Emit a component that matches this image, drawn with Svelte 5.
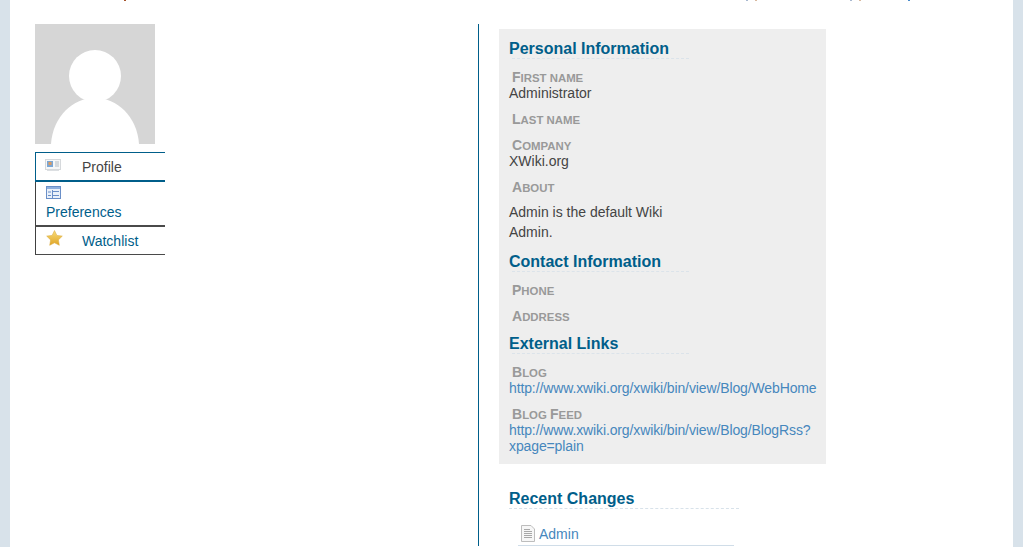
<script>
	const sections = [
		{ title: 'Personal Information', fields: [
			{ label: 'First name', value: 'Administrator' },
			{ label: 'Last name' },
			{ label: 'Company', value: 'XWiki.org' },
			{ label: 'About', about: 'Admin is the default Wiki Admin.' }
		] },
		{ title: 'Contact Information', fields: [
			{ label: 'Phone' },
			{ label: 'Address' }
		] },
		{ title: 'External Links', fields: [
			{ label: 'Blog', link: 'http://www.xwiki.org/xwiki/bin/view/Blog/WebHome' },
			{ label: 'Blog Feed', link: 'http://www.xwiki.org/xwiki/bin/view/Blog/BlogRss?xpage=plain' }
		] }
	];

	// small caps by hand: capitals stay big, the rest gets the smaller size
	const capsParts = (text) => text.match(/[A-Z]|[^A-Z]+/g);
</script>

<div class="page">
	<div class="clipped" aria-hidden="true">
		<i class="tick a"></i><i class="tick b"></i><i class="tick c"></i><i class="tick d"></i><i class="tick e"></i><i class="tick f"></i>
	</div>
	<div class="columns">
		<div class="left">
			<svg class="avatar" width="120" height="120" viewBox="0 0 120 120">
				<rect width="120" height="120" fill="#d6d6d6" />
				<circle cx="60" cy="52" r="26" fill="#fff" />
				<path d="M16 120 C18 92 38 74 60 74 C82 74 102 92 104 120 Z" fill="#fff" />
			</svg>
			<ul class="menu">
				<li class="profile">
					<svg width="16" height="12" viewBox="0 0 16 12">
						<rect x="0.5" y="0.5" width="15" height="10" fill="#f6f7f8" stroke="#d6d9dc" />
						<rect x="2" y="2" width="6" height="6" fill="#7aa6d4" />
						<rect x="3.500" y="3" width="3" height="3" fill="#dd9a5e" />
						<path d="M10 3h4M10 5h4M10 7h4" stroke="#b4bbc2" />
						<path d="M2 11.500h12" stroke="#dcdfe2" />
					</svg>
					<a class="dark" href="#profile">Profile</a>
				</li>
				<li class="prefs">
					<svg width="15" height="13" viewBox="0 0 15 13">
						<rect x="0.5" y="0.5" width="14" height="12" fill="#eaf1fa" stroke="#6a8fc8" />
						<rect x="1" y="1" width="13" height="2" fill="#8fb0de" />
						<path d="M2 6h3M2 9.500h3M7 5.500h6M7 9.500h6M6.500 4v8" stroke="#6a8fc8" />
					</svg>
					<a href="#preferences">Preferences</a>
				</li>
				<li class="watch">
					<svg width="17" height="16" viewBox="0 0 17 16">
						<defs>
							<linearGradient id="star" x1="0" y1="0" x2="0" y2="1">
								<stop offset="0" stop-color="#f8dc78" />
								<stop offset="1" stop-color="#e0a526" />
							</linearGradient>
						</defs>
						<path d="M8.500 0.500 L10.900 5.400 L16.300 6.100 L12.400 9.900 L13.300 15.300 L8.500 12.800 L3.700 15.300 L4.600 9.900 L0.700 6.100 L6.100 5.400 Z" fill="url(#star)" stroke="#d9a93a" stroke-width="0.5" />
					</svg>
					<a href="#watchlist">Watchlist</a>
				</li>
			</ul>
		</div>

		<div class="right">
			<div class="panel">
				{#each sections as section}
					<h2>{section.title}</h2>
					{#each section.fields as field}
						<div class="field">
							<div class="label">{#each capsParts(field.label) as part}{#if /[A-Z]/.test(part)}{part}{:else}<span class="small">{part}</span>{/if}{/each}</div>
							{#if field.value}<div class="value">{field.value}</div>{/if}
							{#if field.about}<p class="about">{field.about}</p>{/if}
							{#if field.link}<a class="url" href={field.link}>{field.link}</a>{/if}
						</div>
					{/each}
				{/each}
			</div>

			<div class="recent">
				<h2>Recent Changes</h2>
				<div class="change">
					<svg width="14" height="17" viewBox="0 0 14 17">
						<path d="M0.500 0.500 H10 L13.500 4 V16.500 H0.500 Z" fill="#f7f7f7" stroke="#bdbdbd" />
						<path d="M3 4.500h6M3 6.500h8M3 8.500h8M3 10.500h8M3 12.500h8" stroke="#a8a8a8" />
					</svg>
					<a href="#admin">Admin</a>
				</div>
			</div>
		</div>
	</div>
</div>

<style>
	:global(body) { background: #d8e2ea; font-family: "Liberation Sans", Arial, sans-serif; font-size: 14px; color: #444; overflow: hidden; }
	.page { margin: 0 10px; background: #fff; height: 547px; overflow: hidden; }
	.clipped { height: 1px; position: relative; }
	.tick { position: absolute; top: 0; width: 2px; height: 1px; }
	.tick.a { left: 114px; background: #a5522a; }
	.tick.b { left: 736px; background: #a9b9d0; }
	.tick.c { left: 745px; background: #d8b9a0; }
	.tick.d { left: 840px; background: #a9b9d0; }
	.tick.e { left: 849px; background: #d8b9a0; }
	.tick.f { left: 898px; background: #4a8ccc; }
	.columns { display: flex; padding: 23px 0 0 25px; }
	.left { width: 443px; flex: none; }
	.avatar { display: block; }
	.menu { list-style: none; margin: 8px 0 0; padding: 0; width: 130px; }
	.menu li { border-left: 1px solid #404040; line-height: 16px; position: relative; box-sizing: border-box; }
	.menu svg { display: block; }
	.menu a { color: #005e8a; text-decoration: none; }
	.menu a.dark { color: #444; }
	.profile { height: 30px; border-top: 1px solid #005e8a; border-bottom: 2px solid #005e8a; border-left-color: #005e8a !important; padding: 6px 0 0 46px; }
	.profile svg { position: absolute; left: 9px; top: 6px; }
	.prefs { height: 45px; border-bottom: 2px solid #4a4a4a; padding: 4px 0 0 10px; }
	.prefs a { display: block; margin-top: 5px; }
	.watch { height: 28px; border-bottom: 1px solid #4a4a4a; padding: 6px 0 0 46px; }
	.watch svg { position: absolute; left: 10px; top: 3px; }
	.right { border-left: 1px solid #005e8a; padding: 5px 0 0 20px; width: 327px; flex: none; }
	.panel { background: #eee; padding: 10px; width: 327px; box-sizing: border-box; }
	h2 { margin: 0; color: #005e8a; font-size: 16px; line-height: 19px; font-weight: bold; }
	.field + h2 { margin-top: 10px; }
	.panel h2::after { content: ""; display: block; margin-left: 3px; width: 177px; border-bottom: 1px dashed #dbe3ea; }
	.field { margin: 10px 0 0; }
	.label { font-weight: bold; color: #999; padding-left: 3px; height: 16px; line-height: 16px; }
	.small { font-size: 11.4px; text-transform: uppercase; }
	.value { line-height: 16px; }
	.about { margin: 0; width: 190px; line-height: 20px; padding-top: 7px; }
	.url { color: #4687bd; text-decoration: none; line-height: 16px; display: block; letter-spacing: -0.12px; }
	.recent { padding: 25px 0 0 10px; }
	.recent h2::after { content: ""; display: block; width: 230px; border-bottom: 1px dashed #d8e2ea; }
	.change { display: flex; align-items: flex-end; gap: 4px; width: 216px; margin: 16px 0 0 9px; padding: 0 0 3px 3px; border-bottom: 1px solid #d0dde8; box-sizing: border-box; }
	.change a { color: #4687bd; text-decoration: none; line-height: 16px; }
</style>
